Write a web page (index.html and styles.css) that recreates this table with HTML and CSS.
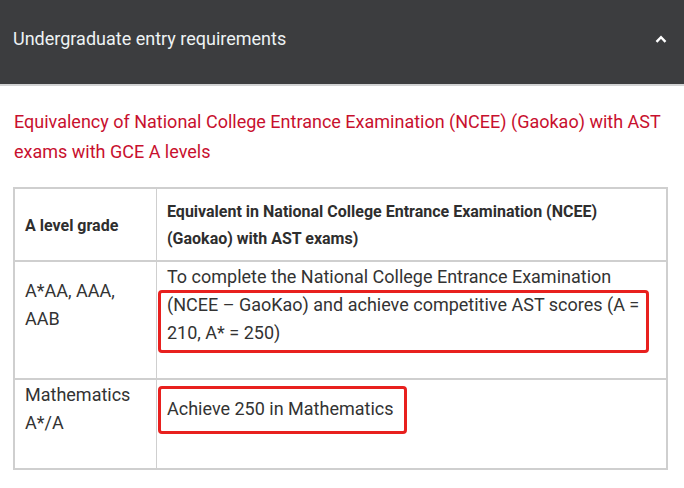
FILE: index.html
```html
<!DOCTYPE html>
<html>
<head>
<meta charset="utf-8">
<link rel="stylesheet" href="styles.css">
</head>
<body>
<div class="accordion">
  <div class="acc-head">
    <span class="acc-title">Undergraduate entry requirements</span>
    <svg class="chev" width="12" height="8" viewBox="0 0 12 8"><path d="M1.5 6.8 L6 2.2 L10.5 6.8" fill="none" stroke="#ffffff" stroke-width="2.4"/></svg>
  </div>
  <div class="acc-body">
    <h3 class="sub">Equivalency of National College Entrance Examination (NCEE) (Gaokao) with AST exams with GCE A levels</h3>
    <table class="grid">
      <thead>
        <tr>
          <th class="c1">A level grade</th>
          <th class="c2">Equivalent in National College Entrance Examination (NCEE) (Gaokao) with AST exams)</th>
        </tr>
      </thead>
      <tbody>
        <tr>
          <td>A*AA, AAA, AAB</td>
          <td>To complete the National College Entrance Examination (NCEE – GaoKao) and achieve competitive AST scores (A = 210, A* = 250)</td>
        </tr>
        <tr>
          <td>Mathematics A*/A</td>
          <td>Achieve 250 in Mathematics</td>
        </tr>
      </tbody>
    </table>
  </div>
</div>
<div class="mark mark-1"></div>
<div class="mark mark-2"></div>
</body>
</html>
```
FILE: styles.css
```css
html, body {
  margin: 0;
  padding: 0;
  background: #ffffff;
}
body {
  font-family: Roboto, "Liberation Sans", Arial, sans-serif;
  position: relative;
  width: 684px;
  height: 488px;
  overflow: hidden;
}
.acc-head {
  height: 84px;
  background: #3c3d3f;
  border-bottom: 2px solid #d2d3d4;
  display: flex;
  align-items: center;
  justify-content: space-between;
  padding: 0 17px 0 13px;
  box-sizing: content-box;
}
.acc-title {
  color: #eef3f4;
  font-size: 18px;
  padding-bottom: 7px;
}
.chev {
  margin-bottom: 6px;
}
.acc-body {
  padding: 21px 16px 0 13px;
}
.sub {
  margin: 0 0 20px 1px;
  color: #c8102e;
  font-weight: 400;
  font-size: 18px;
  line-height: 30px;
}
.grid {
  border-collapse: collapse;
  width: 655px;
  border: 2px solid #cfcfcf;
  color: #333333;
}
.grid th, .grid td {
  border: 1px solid #cfcfcf;
  text-align: left;
  vertical-align: middle;
}
.grid th {
  font-size: 16px;
  font-weight: 700;
  line-height: 27px;
  padding: 9px 10px 8px;
  color: #2e2e2e;
}
.grid th.c1 {
  width: 121px;
}
.grid td {
  font-size: 18px;
  line-height: 28px;
  padding: 1px 10px 31px 10px;
}
.grid tbody tr {
  border-top: 2px solid #cfcfcf;
}
.mark {
  position: absolute;
  border: 3px solid #e8201e;
  border-radius: 4px;
  box-sizing: border-box;
}
.mark-1 {
  left: 158px;
  top: 290px;
  width: 491px;
  height: 63px;
}
.mark-2 {
  left: 158px;
  top: 386px;
  width: 249px;
  height: 48px;
}
```
